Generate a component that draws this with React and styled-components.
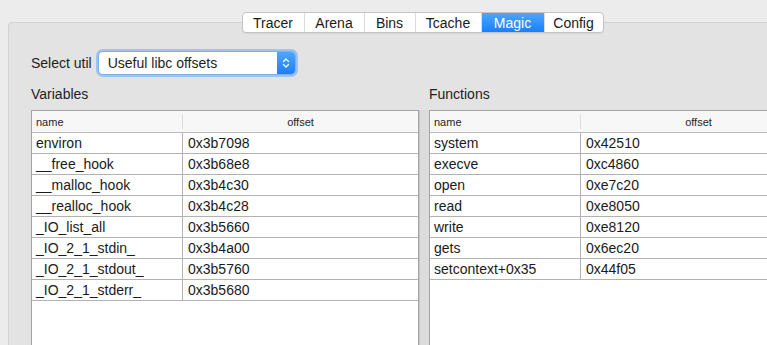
import React from "react";
import styled, { createGlobalStyle } from "styled-components";

const Global = createGlobalStyle`
  html, body { margin: 0; padding: 0; }
  body {
    background: #ececec;
    font-family: "Liberation Sans", Arial, Helvetica, sans-serif;
    color: #1e1e1e;
    overflow: hidden;
    width: 767px;
    height: 345px;
  }
`;

const Window = styled.div`
  width: 845px;
  padding: 12px 8px 0 8px;
  box-sizing: border-box;
`;

const TabBar = styled.div`
  display: flex;
  justify-content: center;
  margin-bottom: -11px;
  position: relative;
  z-index: 1;
`;

const Tabs = styled.div`
  display: flex;
  height: 19px;
  border: 1px solid #c4c4c4;
  border-radius: 4px;
  background: #ffffff;
  overflow: hidden;
  box-shadow: 0 1px 1px rgba(0, 0, 0, 0.06);
`;

const Tab = styled.div`
  display: flex;
  align-items: center;
  justify-content: center;
  width: ${(p) => p.$w}px;
  font-size: 14px;
  color: ${(p) => (p.$active ? "#ffffff" : "#1a1a1a")};
  background: ${(p) =>
    p.$active ? "linear-gradient(#4ea6fd, #1a80fa)" : "transparent"};
  border-left: ${(p) => (p.$first ? "none" : "1px solid #dadada")};
  box-sizing: border-box;
`;

const Pane = styled.div`
  border: 1px solid #d2d2d2;
  border-radius: 4px;
  background: #e3e3e3;
  padding: 29px 18px 0 22px;
  height: 400px;
  box-sizing: border-box;
`;

const SelectRow = styled.div`
  display: flex;
  align-items: center;
  gap: 7px;
  height: 22px;
`;

const Label = styled.span`
  font-size: 14px;
  color: #1e1e1e;
`;

const SelectBox = styled.div`
  display: flex;
  align-items: stretch;
  width: 196px;
  height: 22px;
  box-sizing: border-box;
  border-radius: 4px;
  background: #fff;
  box-shadow: 0 0 0 1px #7db1ee, 0 0 0 3px rgba(120, 170, 240, 0.6);
  overflow: hidden;
`;

const SelectText = styled.div`
  flex: 1;
  display: flex;
  align-items: center;
  padding-left: 9px;
  font-size: 14px;
  color: #1e1e1e;
`;

const Stepper = styled.div`
  width: 18px;
  display: flex;
  align-items: center;
  justify-content: center;
  background: linear-gradient(#4ea6fd, #1a80fa);
`;

const Columns = styled.div`
  display: grid;
  grid-template-columns: 388px 10px 388px;
  margin-top: 12px;
`;

const Column = styled.div`
  display: flex;
  flex-direction: column;
  gap: 8px;
`;

const Splitter = styled.div`
  margin-top: 24px;
  background: #dcdcdc;
  border-left: 1px solid #c6c6c6;
  height: 300px;
`;

const SectionLabel = styled.div`
  font-size: 14px;
  line-height: 16px;
  color: #1e1e1e;
`;

const Table = styled.div`
  border: 1px solid #a4a4a4;
  border-bottom: none;
  background: #fff;
  height: 300px;
  display: flex;
  flex-direction: column;
`;

const HeaderRow = styled.div`
  display: grid;
  grid-template-columns: 150px 1fr;
  height: 21px;
  border-bottom: 1px solid #bcbcbc;
  background: #f7f7f7;
  font-size: 11px;
  color: #262626;
`;

const HeaderCell = styled.div`
  display: flex;
  align-items: center;
  justify-content: ${(p) => (p.$center ? "center" : "flex-start")};
  padding-left: ${(p) => (p.$center ? "0" : "4px")};
  margin: 3px 0;
  border-left: ${(p) => (p.$center ? "1px solid #dddddd" : "none")};
`;

const Row = styled.div`
  display: grid;
  grid-template-columns: 150px 1fr;
  height: 20px;
  border-bottom: 1px solid #b2b2b2;
  font-size: 14px;
  color: #1a1a1a;
`;

const Cell = styled.div`
  display: flex;
  align-items: center;
  padding-left: ${(p) => (p.$second ? "5px" : "4px")};
  border-left: ${(p) => (p.$second ? "1px solid #b2b2b2" : "none")};
  white-space: nowrap;
`;

const variables = [
  ["environ", "0x3b7098"],
  ["__free_hook", "0x3b68e8"],
  ["__malloc_hook", "0x3b4c30"],
  ["__realloc_hook", "0x3b4c28"],
  ["_IO_list_all", "0x3b5660"],
  ["_IO_2_1_stdin_", "0x3b4a00"],
  ["_IO_2_1_stdout_", "0x3b5760"],
  ["_IO_2_1_stderr_", "0x3b5680"],
];

const functions = [
  ["system", "0x42510"],
  ["execve", "0xc4860"],
  ["open", "0xe7c20"],
  ["read", "0xe8050"],
  ["write", "0xe8120"],
  ["gets", "0x6ec20"],
  ["setcontext+0x35", "0x44f05"],
];

const tabs = [
  ["Tracer", 61],
  ["Arena", 60],
  ["Bins", 51],
  ["Tcache", 66],
  ["Magic", 63],
  ["Config", 59],
];

function DataTable({ rows }) {
  return (
    <Table>
      <HeaderRow>
        <HeaderCell>name</HeaderCell>
        <HeaderCell $center>offset</HeaderCell>
      </HeaderRow>
      {rows.map(([n, o]) => (
        <Row key={n}>
          <Cell>{n}</Cell>
          <Cell $second>{o}</Cell>
        </Row>
      ))}
    </Table>
  );
}

export default function App() {
  return (
    <>
      <Global />
      <Window>
        <TabBar>
          <Tabs>
            {tabs.map(([t, w], i) => (
              <Tab key={t} $w={w} $first={i === 0} $active={t === "Magic"}>
                {t}
              </Tab>
            ))}
          </Tabs>
        </TabBar>
        <Pane>
          <SelectRow>
            <Label>Select util</Label>
            <SelectBox>
              <SelectText>Useful libc offsets</SelectText>
              <Stepper>
                <svg width="8" height="12" viewBox="0 0 8 12">
                  <path
                    d="M1.5 4.5 L4 2 L6.5 4.5 M1.5 7.5 L4 10 L6.5 7.5"
                    stroke="#fff"
                    strokeWidth="1.3"
                    fill="none"
                    strokeLinecap="round"
                    strokeLinejoin="round"
                  />
                </svg>
              </Stepper>
            </SelectBox>
          </SelectRow>
          <Columns>
            <Column>
              <SectionLabel>Variables</SectionLabel>
              <DataTable rows={variables} />
            </Column>
            <Splitter />
            <Column>
              <SectionLabel>Functions</SectionLabel>
              <DataTable rows={functions} />
            </Column>
          </Columns>
        </Pane>
      </Window>
    </>
  );
}
